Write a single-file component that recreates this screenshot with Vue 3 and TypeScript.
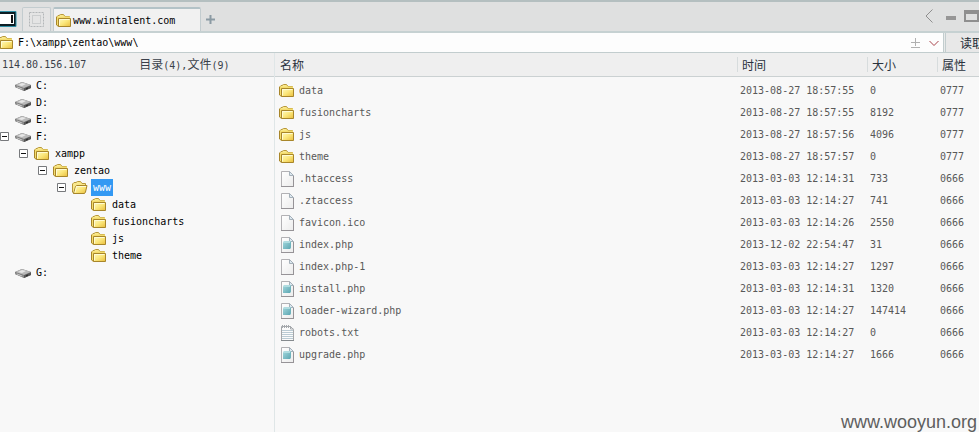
<script setup lang="ts">
import { computed, ref } from 'vue'

interface TreeNode {
  path: string
  label: string
  level: number
  icon: 'drive' | 'folder' | 'folder-open'
  expandable?: boolean
}

interface Entry {
  name: string
  icon: 'folder' | 'file' | 'php' | 'text'
  time: string
  size: string
  mode: string
}

const path = ref('F:\\xampp\\zentao\\www\\')
const selected = ref('F/xampp/zentao/www')
const collapsed = ref<string[]>([])

const nodes: TreeNode[] = [
  { path: 'C', label: 'C:', level: 0, icon: 'drive' },
  { path: 'D', label: 'D:', level: 0, icon: 'drive' },
  { path: 'E', label: 'E:', level: 0, icon: 'drive' },
  { path: 'F', label: 'F:', level: 0, icon: 'drive', expandable: true },
  { path: 'F/xampp', label: 'xampp', level: 1, icon: 'folder', expandable: true },
  { path: 'F/xampp/zentao', label: 'zentao', level: 2, icon: 'folder', expandable: true },
  { path: 'F/xampp/zentao/www', label: 'www', level: 3, icon: 'folder-open', expandable: true },
  { path: 'F/xampp/zentao/www/data', label: 'data', level: 4, icon: 'folder' },
  { path: 'F/xampp/zentao/www/fusioncharts', label: 'fusioncharts', level: 4, icon: 'folder' },
  { path: 'F/xampp/zentao/www/js', label: 'js', level: 4, icon: 'folder' },
  { path: 'F/xampp/zentao/www/theme', label: 'theme', level: 4, icon: 'folder' },
  { path: 'G', label: 'G:', level: 0, icon: 'drive' },
]

const entries: Entry[] = [
  { name: 'data', icon: 'folder', time: '2013-08-27 18:57:55', size: '0', mode: '0777' },
  { name: 'fusioncharts', icon: 'folder', time: '2013-08-27 18:57:55', size: '8192', mode: '0777' },
  { name: 'js', icon: 'folder', time: '2013-08-27 18:57:56', size: '4096', mode: '0777' },
  { name: 'theme', icon: 'folder', time: '2013-08-27 18:57:57', size: '0', mode: '0777' },
  { name: '.htaccess', icon: 'file', time: '2013-03-03 12:14:31', size: '733', mode: '0666' },
  { name: '.ztaccess', icon: 'file', time: '2013-03-03 12:14:27', size: '741', mode: '0666' },
  { name: 'favicon.ico', icon: 'file', time: '2013-03-03 12:14:26', size: '2550', mode: '0666' },
  { name: 'index.php', icon: 'php', time: '2013-12-02 22:54:47', size: '31', mode: '0666' },
  { name: 'index.php-1', icon: 'file', time: '2013-03-03 12:14:27', size: '1297', mode: '0666' },
  { name: 'install.php', icon: 'php', time: '2013-03-03 12:14:31', size: '1320', mode: '0666' },
  { name: 'loader-wizard.php', icon: 'php', time: '2013-03-03 12:14:27', size: '147414', mode: '0666' },
  { name: 'robots.txt', icon: 'text', time: '2013-03-03 12:14:27', size: '0', mode: '0666' },
  { name: 'upgrade.php', icon: 'php', time: '2013-03-03 12:14:27', size: '1666', mode: '0666' },
]

const visibleNodes = computed(() =>
  nodes.filter((n) => !collapsed.value.some((c) => n.path.startsWith(c + '/'))),
)

function toggle(node: TreeNode) {
  collapsed.value = collapsed.value.includes(node.path)
    ? collapsed.value.filter((p) => p !== node.path)
    : [...collapsed.value, node.path]
}
</script>

<template>
  <div class="app">
    <svg class="defs" aria-hidden="true">
      <defs>
        <linearGradient id="gold" x1="0" y1="0" x2="1" y2="1">
          <stop offset="0" stop-color="#fffbc4" />
          <stop offset="0.5" stop-color="#fbe77c" />
          <stop offset="1" stop-color="#e9bd3c" />
        </linearGradient>
        <linearGradient id="paper" x1="0" y1="0" x2="1" y2="1">
          <stop offset="0" stop-color="#ffffff" />
          <stop offset="1" stop-color="#ececec" />
        </linearGradient>
        <linearGradient id="teal" x1="0" y1="0" x2="1" y2="1">
          <stop offset="0" stop-color="#a4d8dd" />
          <stop offset="1" stop-color="#5ba5b1" />
        </linearGradient>
        <symbol id="folder" viewBox="0 0 16 16">
          <path d="M.5 11.500V4L2 2.500h1L4.500 1.500h3L9 3.500h4.500v2" fill="#f9e88c" stroke="#b8983a" />
          <path d="M.5 4v8l2 1.500V5.500H14V3.500H9z" fill="#f4dc6c" />
          <path d="M.5 4v8l2 1.500" fill="none" stroke="#a8862a" />
          <path d="M2.500 5.500h12v8h-12z" fill="url(#gold)" stroke="#a8862a" />
          <path d="M3.500 12.500v-6h10" fill="none" stroke="#fffbd2" />
        </symbol>
        <symbol id="folder-open" viewBox="0 0 16 16">
          <path d="M.5 12V4L2 2.500h2L5.500 1.500h3L10 3.500h3.500v3" fill="#f9e88c" stroke="#b8983a" />
          <path d="M1.500 13.500 3.500 6.500 4.500 5.500h10.500L13.500 12l-1 1.500z" fill="url(#gold)" stroke="#a8862a" />
          <path d="M3 12.500l1.500-6h9.500" fill="none" stroke="#fffbd2" />
          <path d="M.5 11.500l1 2" stroke="#a8862a" />
        </symbol>
        <symbol id="drive" viewBox="0 0 16 16">
          <path d="M0 7 7 4l9 3v3l-7 3-9-4z" fill="#6c6c6c" />
          <path d="M0 7 7 4l9 3-7 3z" fill="#b9b9b9" />
          <path d="M3 7l4-2 4 1-4 2z" fill="#e6e6e6" />
          <path d="M0 7.500 9 10.500v2L0 9z" fill="#8f8f8f" />
          <path d="M9 10.500l7-3v2.500l-7 3z" fill="#555" />
          <path d="M11 10.500l2-1v1l-2 1z" fill="#222" />
          <path d="M2 9l5 2" stroke="#ddd" stroke-width=".7" />
        </symbol>
        <symbol id="file" viewBox="0 0 16 16">
          <path d="M2.500.5h8l4 4v11h-12z" fill="url(#paper)" stroke="#b2b1b4" />
          <path d="M10.500.5v4h4z" fill="#dce8f0" stroke="#a5b0b9" />
          <path d="M2 15.500h13M14.500 5v10" stroke="#969397" />
        </symbol>
        <symbol id="php" viewBox="0 0 16 16">
          <use href="#file" width="16" height="16" />
          <path d="M5 4h7v6l-1 2H4V6z" fill="url(#teal)" />
          <path d="M4 6l1-2h7l-1 2z" fill="#b0dce0" />
          <path d="M11 12V6l1-2v6z" fill="#6fb3bd" />
        </symbol>
        <symbol id="text" viewBox="0 0 16 16">
          <path d="M2.500 1.500h9l3 3v11h-12z" fill="#fbfbfb" stroke="#a5a7aa" />
          <path d="M3.500 0v3M5.500 0v3M7.500 0v3M9.500 0v3M11.500 1v3h3" fill="none" stroke="#a5a9ad" />
          <path d="M3 5.500h11M3 7.500h11M3 9.500h11M3 11.500h11M3 13.500h11" stroke="#bacbd4" />
          <path d="M2 15.500h13" stroke="#858a8e" />
        </symbol>
      </defs>
    </svg>

    <header class="tabs">
      <button class="side-toggle" type="button" aria-label="侧栏">
        <svg width="17" height="18" viewBox="0 0 17 18">
          <path d="M-1 1.500h17v15H-1z" fill="#0c1c22" stroke="#2f8fa5" />
          <path d="M0 4h14v10H0z" fill="#fff" />
          <path d="M11 5h2v8h-2z" fill="#111" />
        </svg>
      </button>
      <button class="tab blank" type="button" aria-label="空白">
        <svg width="15" height="15" viewBox="0 0 15 15" fill="none" stroke="#b3b6b8">
          <path d="M.5 .5h14v14H.5z" stroke-dasharray="2 1" />
          <path d="M3.500 3.500h8v8h-8z" stroke-dasharray="1 1" />
        </svg>
      </button>
      <button class="tab active" type="button">
        <svg class="icon" width="16" height="16"><use href="#folder" /></svg>
        <span>www.wintalent.com</span>
      </button>
      <button class="plus" type="button" aria-label="新建">
        <svg width="9" height="9" viewBox="0 0 9 9"><path d="M4.500 0v9M0 4.500h9" stroke="#8b9aa3" stroke-width="2" /></svg>
      </button>
      <div class="window">
        <button type="button" aria-label="后退">
          <svg width="8" height="14" viewBox="0 0 8 14"><path d="M7.500.5 1 7l6.500 6.500" fill="none" stroke="#8f8f8f" /></svg>
        </button>
        <button type="button" aria-label="最小化">
          <svg width="10" height="14" viewBox="0 0 10 14"><path d="M0 7h10v4H0z" fill="#969696" /></svg>
        </button>
        <button type="button" aria-label="最大化">
          <svg width="15" height="14" viewBox="0 0 15 14"><path d="M0 1h15v12H0zM2 5v6h11V5z" fill="#8f8f8f" fill-rule="evenodd" /></svg>
        </button>
      </div>
    </header>

    <form class="address" @submit.prevent>
      <div class="field">
        <svg width="16" height="16"><use href="#folder" /></svg>
        <input v-model="path" type="text" aria-label="路径" spellcheck="false" />
        <button type="button" aria-label="收藏">
          <svg width="10" height="12" viewBox="0 0 10 12"><path d="M4.500 1v8M0 5.500h9M0 10.500h9" stroke="#b0b0b0" /></svg>
        </button>
        <button type="button" aria-label="历史">
          <svg width="10" height="12" viewBox="0 0 10 12"><path d="M.5 4 5 8.500 9.500 4" fill="none" stroke="#a8424a" /></svg>
        </button>
      </div>
      <button class="read" type="submit">读取</button>
    </form>

    <div class="body">
      <aside class="side">
        <div class="summary">
          <span>114.80.156.107</span>
          <span class="counts"><b>目录</b>(4),<b>文件</b>(9)</span>
        </div>
        <ul class="tree">
          <li v-for="node in visibleNodes" :key="node.path" :style="{ paddingLeft: node.level * 19 + 'px' }">
            <button v-if="node.expandable" class="expander" type="button" :aria-label="node.label" @click="toggle(node)">
              <svg width="9" height="9" viewBox="0 0 9 9">
                <path d="M.5.5h8v8h-8z" fill="#fff" stroke="#77797c" />
                <path d="M2 4.500h5" stroke="#111" />
                <path v-if="collapsed.includes(node.path)" d="M4.500 2v5" stroke="#111" />
              </svg>
            </button>
            <span v-else class="expander"></span>
            <svg width="16" height="16"><use :href="'#' + node.icon" /></svg>
            <button class="label" :class="{ selected: selected === node.path }" type="button" @click="selected = node.path">
              {{ node.label }}
            </button>
          </li>
        </ul>
      </aside>

      <main class="list">
        <table>
          <thead>
            <tr>
              <th class="name">名称</th>
              <th class="time">时间</th>
              <th class="size">大小</th>
              <th class="mode">属性</th>
            </tr>
          </thead>
          <tbody>
            <tr v-for="entry in entries" :key="entry.name">
              <td>
                <div class="entry">
                  <svg width="16" height="16"><use :href="'#' + entry.icon" /></svg>
                  <span>{{ entry.name }}</span>
                </div>
              </td>
              <td>{{ entry.time }}</td>
              <td>{{ entry.size }}</td>
              <td>{{ entry.mode }}</td>
            </tr>
          </tbody>
        </table>
      </main>
    </div>

    <div class="watermark">www.wooyun.org</div>
  </div>
</template>

<style>
body {
  margin: 0;
  background: #f8f8f8;
}
</style>

<style scoped>
.app {
  display: flex;
  flex-direction: column;
  min-height: 100vh;
  overflow: hidden;
  background: #f8f8f8;
  color: #000;
  font: 10px/16px "DejaVu Sans Mono", "Noto Sans CJK SC", monospace;
}

.app * {
  box-sizing: border-box;
}

.defs {
  position: absolute;
  width: 0;
  height: 0;
}

svg {
  display: block;
  flex: none;
}

button,
input {
  margin: 0;
  padding: 0;
  border: 0;
  background: none;
  color: inherit;
  font: inherit;
}

.tabs {
  display: flex;
  align-items: flex-end;
  height: 31px;
  border-top: 2px solid #b4bfc0;
  background: #dfe0e0;
}

.side-toggle {
  width: 22px;
  padding-bottom: 3px;
}

.tab {
  display: flex;
  align-items: center;
  height: 24px;
  border: 1px solid #c3cccf;
  border-bottom: 0;
  border-radius: 2px 2px 0 0;
}

.blank {
  justify-content: center;
  width: 29px;
  margin-right: 2px;
  background: #e4e4e4;
}

.active {
  gap: 1px;
  width: 148px;
  padding-top: 1px;
  padding-left: 2px;
  border-top: 2px solid #b3c2c7;
  background: #f1f1f1;
}

.plus {
  padding: 0 5px 7px;
}

.window {
  display: flex;
  gap: 13px;
  margin-left: auto;
  padding-bottom: 8px;
}

.window button:last-child {
  margin-left: -5px;
}

.address {
  display: flex;
  gap: 1px;
  height: 22px;
  border-top: 2px solid #c6d1d2;
  border-bottom: 1px solid #c2cdce;
  background: #e9eaea;
}

.field {
  display: flex;
  flex: 1;
  align-items: center;
  gap: 8px;
  min-width: 0;
  padding-top: 1px;
  padding-right: 4px;
  border-right: 1px solid #c2cdce;
  background: #fdfdfd;
}

.field > svg {
  margin-left: -2px;
}

.field input {
  flex: 1;
  min-width: 0;
  margin-left: -4px;
  outline: 0;
}

.read {
  flex: none;
  width: 34px;
  padding-left: 14px;
  overflow: hidden;
  border-left: 1px solid #c2cdce;
  background: #e8e8e8;
  color: #222b35;
  font: 12px/16px "Noto Sans CJK SC", sans-serif;
  text-align: left;
  white-space: nowrap;
}

.body {
  display: flex;
  flex: 1;
}

.side {
  flex: none;
  width: 275px;
  border-right: 1px solid #dfe6e7;
}

.summary {
  display: flex;
  align-items: center;
  height: 24px;
  padding-left: 2px;
  border-bottom: 1px solid #cbd1d2;
  background: #efefef;
  color: #3a3f4a;
}

.counts {
  margin-left: 53px;
}

.counts b {
  font: 12px/16px "Noto Sans CJK SC", sans-serif;
}

.tree {
  margin: 0;
  padding: 0;
  list-style: none;
}

.tree li {
  display: flex;
  align-items: center;
  height: 17px;
}

.expander {
  flex: none;
  width: 9px;
  margin-right: 6px;
}

.label {
  height: 17px;
  margin-left: 3px;
  padding: 0 2px;
}

.label.selected {
  background: #3399f3;
  color: #fff;
}

.list {
  flex: 1;
  min-width: 0;
}

table {
  width: 100%;
  border-collapse: separate;
  border-spacing: 0;
  table-layout: fixed;
  color: #595959;
}

th {
  height: 24px;
  padding: 0 5px;
  border-bottom: 1px solid #cbd1d2;
  background: linear-gradient(#d7dcdd, #d7dcdd) 0 50% / 1px 15px no-repeat #efefef;
  color: #2a323d;
  font: 12px/16px "Noto Sans CJK SC", sans-serif;
  text-align: left;
}

th.name {
  background: #efefef;
}

.time {
  width: 130px;
}

.size {
  width: 70px;
}

.mode {
  width: 42px;
}

td {
  height: 22px;
  padding: 0 3px;
}

tbody::before {
  display: table-row;
  height: 3px;
  content: "";
}

.entry {
  display: flex;
  align-items: center;
  gap: 4px;
  padding-left: 1px;
}

.watermark {
  position: absolute;
  right: 2px;
  bottom: 0;
  color: #5e5e5e;
  font: 18px/20px "Liberation Sans", sans-serif;
}
</style>
